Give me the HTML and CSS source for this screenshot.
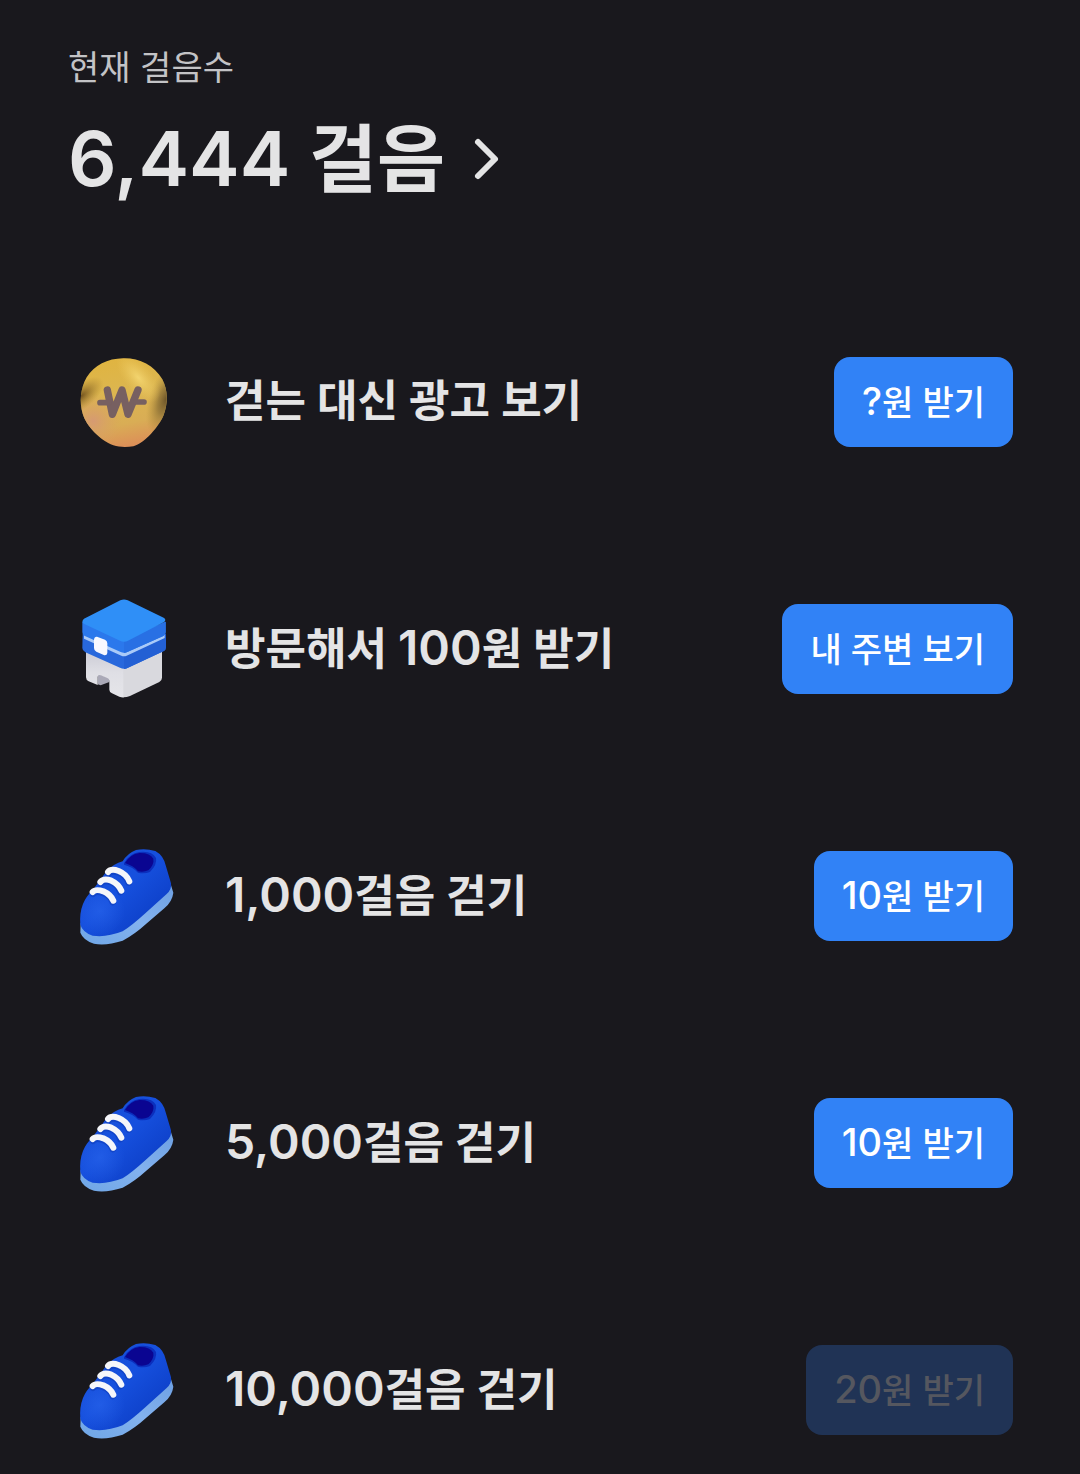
FILE: index.html
```html
<!DOCTYPE html>
<html lang="ko">
<head>
    <meta charset="UTF-8">
    <meta name="viewport" content="width=device-width, initial-scale=1.0">
    <title>만보기</title>
    <link rel="stylesheet" href="styles.css">
</head>
<body>
    <!-- Shared shoe icon -->
    <svg class="defs" width="0" height="0" aria-hidden="true">
        <defs>
            <linearGradient id="shoe-body" x1="0" y1="0.2" x2="0.8" y2="1">
                <stop offset="0" stop-color="#174fd9"/>
                <stop offset="0.45" stop-color="#1650de"/>
                <stop offset="1" stop-color="#0b3bc2"/>
            </linearGradient>
            <radialGradient id="shoe-toe" gradientUnits="userSpaceOnUse" cx="90" cy="215" r="75">
                <stop offset="0" stop-color="#2a66ec" stop-opacity="0.55"/>
                <stop offset="1" stop-color="#2a66ec" stop-opacity="0"/>
            </radialGradient>
            <linearGradient id="shoe-sole" x1="0" y1="1" x2="1" y2="0">
                <stop offset="0" stop-color="#6fa6e6"/>
                <stop offset="0.5" stop-color="#83b2ee"/>
                <stop offset="1" stop-color="#6d9fe2"/>
            </linearGradient>
            <symbol id="shoe" viewBox="-6 2 336 336">
                <path fill="url(#shoe-sole)" d="M32 250 L31 280 Q40 303 72 313 Q108 320 158 304 Q193 286 228 254 L283 207 Q307 186 310 160 L302 134 L150 245 Z"/>
                <path fill="url(#shoe-body)" d="M198 32 Q226 26 256 35 Q280 48 287 78 L303 132 Q306 150 290 164 L226 222 Q182 262 158 276 Q110 295 68 289 Q38 279 31 256 Q28 222 39 194 Q48 172 70 150 L108 98 Q132 72 158 66 Q172 42 198 32 Z"/>
                <path fill="url(#shoe-toe)" d="M31 256 Q28 222 39 194 Q48 172 70 150 L200 150 L200 245 L158 276 Q110 295 68 289 Q38 279 31 256 Z"/>
                <path fill="#0b2fbd" d="M162 72 Q178 42 208 38 Q246 34 258 56 Q262 76 240 98 Q222 105 204 100 Q190 84 162 76 Z"/>
                <path fill="#0a0591" d="M165 71 Q180 45 208 41 Q240 40 250 58 Q253 76 235 93 Q220 100 204 96 Q192 80 165 71 Z"/>
                <g fill="none" stroke="#0a36b0" stroke-width="20" stroke-linecap="round" opacity="0.45">
                    <path d="M115 103 Q124 92 146 99 Q170 110 176 130"/>
                    <path d="M92 132 Q102 120 124 128 Q146 138 151 158"/>
                    <path d="M69 163 Q78 152 100 161 Q122 170 128 188"/>
                </g>
                <g fill="none" stroke="#f5f6fa" stroke-width="18" stroke-linecap="round">
                    <path d="M114 98 Q123 87 146 95 Q170 105 178 126"/>
                    <path d="M91 128 Q101 116 124 124 Q146 134 154 154"/>
                    <path d="M68 158 Q77 148 100 156 Q122 166 130 184"/>
                </g>
            </symbol>
        </defs>
    </svg>

    <main class="steps">
        <header class="steps-header">
            <p class="steps-label">현재 걸음수</p>
            <h1 class="steps-count">
                <a href="#">
                    <span><span class="num">6,444</span> 걸음</span>
                    <svg class="chevron" viewBox="0 0 30 48" aria-hidden="true">
                        <path d="M5 7 L22 24 L5 41"/>
                    </svg>
                </a>
            </h1>
        </header>

        <ul class="mission-list">
            <li class="mission">
                <svg class="mission-icon" viewBox="-6 0 336 336" aria-hidden="true">
                    <defs>
                        <linearGradient id="coin-base" x1="0.3" y1="0" x2="0.5" y2="1">
                            <stop offset="0" stop-color="#e0b440"/>
                            <stop offset="0.4" stop-color="#dcb650"/>
                            <stop offset="0.75" stop-color="#d9ad55"/>
                            <stop offset="1" stop-color="#dc8f58"/>
                        </linearGradient>
                        <radialGradient id="coin-right" gradientUnits="userSpaceOnUse" cx="0" cy="0" r="1" gradientTransform="translate(288 160) rotate(18) scale(52 115)">
                            <stop offset="0" stop-color="#6e562a"/>
                            <stop offset="0.4" stop-color="#8a6e34" stop-opacity="0.75"/>
                            <stop offset="1" stop-color="#b8933d" stop-opacity="0"/>
                        </radialGradient>
                        <radialGradient id="coin-left" gradientUnits="userSpaceOnUse" cx="0" cy="0" r="1" gradientTransform="translate(34 150) rotate(-38) scale(80 38)">
                            <stop offset="0" stop-color="#755520"/>
                            <stop offset="1" stop-color="#a9822f" stop-opacity="0"/>
                        </radialGradient>
                        <radialGradient id="coin-pink" gradientUnits="userSpaceOnUse" cx="70" cy="225" r="85">
                            <stop offset="0" stop-color="#d69a72"/>
                            <stop offset="1" stop-color="#d9a25f" stop-opacity="0"/>
                        </radialGradient>
                        <radialGradient id="coin-shine" gradientUnits="userSpaceOnUse" cx="0" cy="0" r="1" gradientTransform="translate(205 95) rotate(50) scale(90 42)">
                            <stop offset="0" stop-color="#f8dc78" stop-opacity="0.8"/>
                            <stop offset="1" stop-color="#ecc75d" stop-opacity="0"/>
                        </radialGradient>
                        <path id="coin-shape" d="M160 37 C207 36 253 58 277 100 C294 132 294 173 281 207 C268 240 224 292 190 301 C170 304 148 304 130 298 C90 282 49 240 38 203 C28 169 31 128 50 94 C73 57 112 38 160 37 Z"/>
                    </defs>
                    <use href="#coin-shape" fill="url(#coin-base)"/>
                    <use href="#coin-shape" fill="url(#coin-pink)"/>
                    <use href="#coin-shape" fill="url(#coin-left)"/>
                    <use href="#coin-shape" fill="url(#coin-right)"/>
                    <use href="#coin-shape" fill="url(#coin-shine)"/>
                    <g fill="none" stroke="#776061" stroke-linecap="round" stroke-linejoin="round">
                        <path stroke-width="22" d="M112 132 L127 205 L156 132 L174 205 L204 132"/>
                        <path stroke-width="17" d="M90 170 H116 M198 168 H222"/>
                    </g>
                </svg>
                <span class="mission-title">걷는 대신 광고 보기</span>
                <button class="mission-button" type="button"><span class="num">?</span>원 받기</button>
            </li>
            <li class="mission">
                <svg class="mission-icon" viewBox="-6 10 336 336" aria-hidden="true">
                    <defs>
                        <linearGradient id="store-wall" x1="0" y1="0" x2="0" y2="1">
                            <stop offset="0" stop-color="#c9c9d3"/>
                            <stop offset="0.5" stop-color="#dfdfe5"/>
                            <stop offset="1" stop-color="#e5e5e9"/>
                        </linearGradient>
                    </defs>
                    <path fill="#aaa9b7" d="M83 252 L118 264 L118 277 L92 287 L83 284 Z"/>
                    <path fill="url(#store-wall)" d="M48 175 L162 225 L162 323 Q156 324 148 321 L126 311 Q118 307 118 300 L118 273 Q118 267 112 265 L92 257 Q83 254 83 262 L83 286 L56 275 Q48 271 48 263 Z"/>
                    <path fill="#d9d9de" d="M160 225 L276 175 L276 264 Q276 272 268 277 L180 319 Q170 323 160 323 Z"/>
                    <path fill="#2868dc" d="M38 132 L162 190 L288 132 L288 172 Q288 181 280 185 L174 234 Q162 240 150 234 L46 188 Q37 183 37 175 Z"/>
                    <path fill="#2360d4" d="M162 190 L288 132 L288 172 Q288 181 280 185 L174 234 Q168 238 162 238 Z"/>
                    <path fill="#a9caf8" d="M42 132 L162 188 L284 132 L284 145 L170 198 Q162 202 154 198 L42 147 Z"/>
                    <path fill="#2b78ec" d="M37 96 L162 150 L287 96 L287 128 Q287 135 280 139 L172 187 Q162 192 152 187 L43 138 Q37 135 37 128 Z"/>
                    <path fill="#2870e4" d="M162 150 L287 96 L287 128 Q287 135 280 139 L172 187 Q167 190 162 190 Z"/>
                    <path fill="#2f8ff7" d="M42 87 L151 32 Q162 27 173 32 L281 84 Q291 90 281 98 L174 153 Q162 159 150 153 L43 103 Q32 96 42 87 Z"/>
                    <path fill="#f7f8ff" d="M81 141 L105 150 Q112 153 112 161 L112 190 Q111 198 103 197 L79 186 Q72 183 72 175 L72 150 Q73 140 81 141 Z"/>
                </svg>
                <span class="mission-title">방문해서 <span class="num">100</span>원 받기</span>
                <button class="mission-button" type="button">내 주변 보기</button>
            </li>
            <li class="mission">
                <svg class="mission-icon" aria-hidden="true"><use href="#shoe"/></svg>
                <span class="mission-title"><span class="num">1,000</span>걸음 걷기</span>
                <button class="mission-button" type="button"><span class="num">10</span>원 받기</button>
            </li>
            <li class="mission">
                <svg class="mission-icon" aria-hidden="true"><use href="#shoe"/></svg>
                <span class="mission-title"><span class="num">5,000</span>걸음 걷기</span>
                <button class="mission-button" type="button"><span class="num">10</span>원 받기</button>
            </li>
            <li class="mission">
                <svg class="mission-icon" aria-hidden="true"><use href="#shoe"/></svg>
                <span class="mission-title"><span class="num">10,000</span>걸음 걷기</span>
                <button class="mission-button" type="button" disabled><span class="num">20</span>원 받기</button>
            </li>
        </ul>
    </main>
</body>
</html>
```
FILE: styles.css
```css
* {
    box-sizing: border-box;
}

body {
    margin: 0;
    min-height: 100vh;
    background-color: #19181d;
    color: #e4e4e5;
    font-family: Inter, "Noto Sans CJK KR", sans-serif;
}

.defs {
    position: absolute;
}

.steps {
    padding: 44px 67px 24px 68px;
}

.steps-label {
    margin: 0;
    color: #c3c3c6;
    font-size: 34px;
    line-height: 48px;
}

.steps-count {
    margin: 12px 0 0;
    font-size: 74px;
    font-weight: 600;
    line-height: 108px;
}

.steps-count a {
    display: inline-flex;
    align-items: center;
    gap: 28px;
    color: inherit;
    text-decoration: none;
}

/* Digits run a little larger than the Hangul beside them */
.steps-count .num {
    font-size: 76px;
}

.chevron {
    width: 30px;
    height: 48px;
    fill: none;
    stroke: currentColor;
    stroke-width: 6;
    stroke-linecap: round;
    stroke-linejoin: round;
}

.mission-list {
    display: flex;
    flex-direction: column;
    gap: 135px;
    margin: 133px 0 0;
    padding: 0;
    list-style: none;
}

.mission {
    display: flex;
    align-items: center;
}

.mission-icon {
    flex: none;
    width: 112px;
    height: 112px;
}

.mission-title {
    flex: 1;
    margin-left: 45px;
    padding-bottom: 2px;
    font-size: 44px;
    font-weight: 600;
    line-height: 64px;
}

.mission-title .num {
    font-size: 48px;
}

.mission-button {
    flex: none;
    height: 90px;
    padding: 0 28px 4px;
    border: none;
    border-radius: 16px;
    background-color: #3182f6;
    color: #fff;
    font-family: inherit;
    font-size: 34px;
    font-weight: 500;
    cursor: pointer;
}

.mission-button .num {
    font-size: 38px;
}

.mission-button:disabled {
    background-color: #203355;
    color: #55575f;
    cursor: default;
}
```
